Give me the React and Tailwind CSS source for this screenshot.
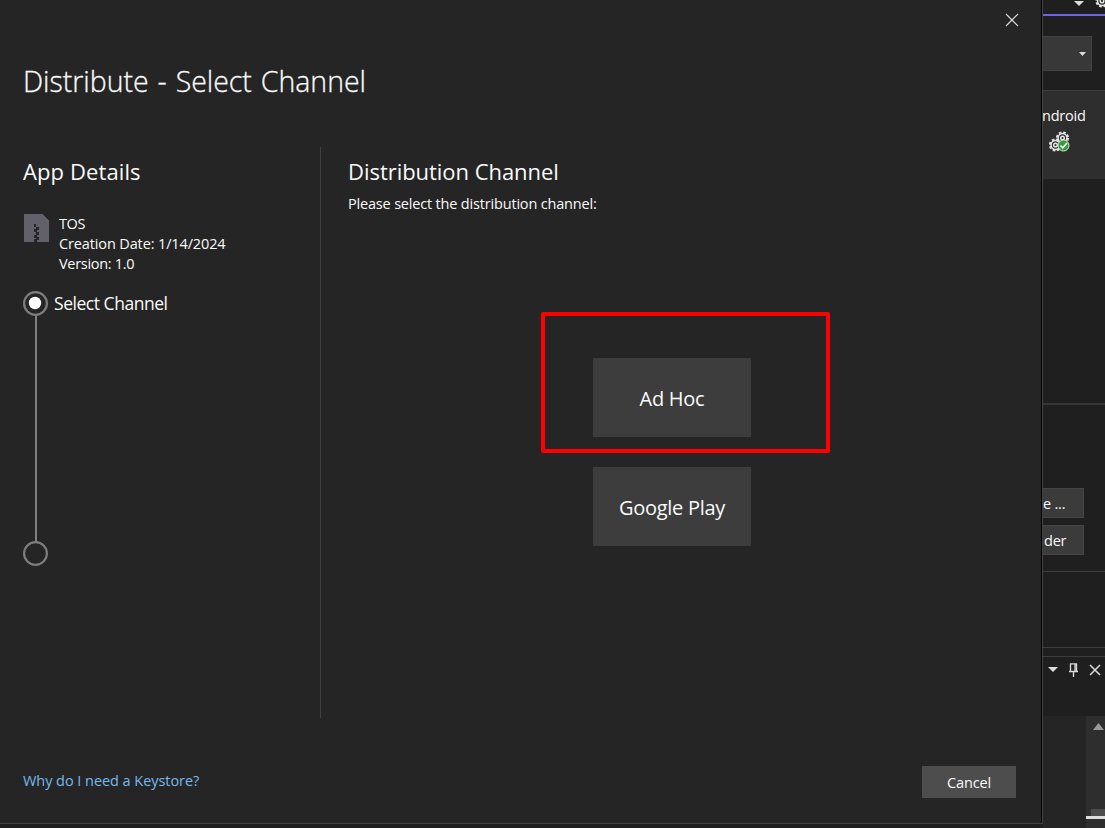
import React from 'react';

function Gear({ cx, cy }) {
  return (
    <g transform={`translate(${cx} ${cy})`}>
      <circle r="5.5" fill="none" stroke="#e4e4e4" strokeWidth="2.2" strokeDasharray="2.6 1.72" />
      <circle r="4.4" fill="none" stroke="#e4e4e4" strokeWidth="1.5" />
      <circle r="1.8" fill="none" stroke="#e4e4e4" strokeWidth="1.5" />
    </g>
  );
}

function CaretDown({ className }) {
  return (
    <svg className={className} viewBox="0 0 10 5" preserveAspectRatio="none">
      <path d="M0 0H10L5 5Z" fill="#dcdcdc" />
    </svg>
  );
}

function Dialog() {
  return (
    <main className="flex h-[824px] w-[1043px] shrink-0 flex-col border-r border-b border-[#444444] bg-[#252525]">
      <div className="flex min-h-0 flex-1 flex-col border-r border-black">
        <div className="flex h-[61px] justify-end pt-[13px] pr-[22px]">
          <svg className="h-[14px] w-[14px]" viewBox="0 0 14 14">
            <path d="M1 1L13 13M13 1L1 13" stroke="#e0e0e0" strokeWidth="1.1" />
          </svg>
        </div>
        <h1 className="h-[86px] pl-[23px] text-[28.5px] leading-[40px] font-light tracking-[-0.03px] [word-spacing:1.6px] [-webkit-text-stroke:0.3px_#fafafa]">Distribute - Select Channel</h1>
        <div className="flex h-[571px]">
          <aside className="w-[321px] border-r border-[#3f3f3f] pl-[23px]">
            <h2 className="pt-[9px] text-[22px] leading-[30px] tracking-[0.1px]">App Details</h2>
            <div className="flex h-[105px] pt-[28px]">
              <svg className="h-[28px] w-[26px] shrink-0" viewBox="0 0 26 28" shapeRendering="crispEdges">
                <path d="M1 0H19L26 7V28H1Z" fill="#62616b" />
                <path d="M11 10h2v3h-2zM13 12.5h3v3h-3zM11 15h2.500v3H11zM13 18h3v3h-3zM11 20.500h2.500v3H11zM13 23h3v2.500h-3zM11 25h2.500v3H11z" fill="#252525" />
              </svg>
              <div className="pl-[10px] text-[14.500px] leading-[20px] tracking-[-0.13px]">
                <p className="tracking-[-0.4px]">TOS</p>
                <p>Creation Date: 1/14/2024</p>
                <p className="tracking-[-0.3px]">Version: 1.0</p>
              </div>
            </div>
            <div className="flex">
              <svg className="h-[275px] w-[25px]" viewBox="0 0 25 275">
                <path d="M13 24V251" stroke="#808080" strokeWidth="2" />
                <circle cx="12.500" cy="12.500" r="11.400" fill="none" stroke="#7d7d7d" strokeWidth="2.200" />
                <circle cx="12" cy="12" r="6.200" fill="#ffffff" />
                <circle cx="12.500" cy="262.500" r="11.400" fill="none" stroke="#7d7d7d" strokeWidth="2.200" />
              </svg>
              <span className="pl-[6px] text-[17.500px] leading-[25px] tracking-[-0.46px]">Select Channel</span>
            </div>
          </aside>
          <section className="relative flex-1 pl-[27px]">
            <h2 className="pt-[9px] text-[22px] leading-[30px] tracking-[-0.04px]">Distribution Channel</h2>
            <p className="pt-[7px] text-[14.500px] leading-[22px] tracking-[-0.18px]">Please select the distribution channel:</p>
            <div className="ml-[245px] flex w-[158px] flex-col gap-[30px] pt-[143px] text-[20px] tracking-[-0.28px]">
              <button className="h-[79px] bg-[#3d3d3d] pt-[3px]">Ad Hoc</button>
              <button className="h-[79px] bg-[#3d3d3d] pt-[3px]">Google Play</button>
            </div>
            <div className="absolute top-[165px] left-[220px] h-[141px] w-[289px] rounded-[2px] border-4 border-[#ff0000]" />
          </section>
        </div>
        <footer className="flex flex-1 items-start justify-between pt-[48px] pr-[25px] pl-[23px] text-[14.500px]">
          <a className="pt-[4px] leading-[22px] tracking-[-0.05px] text-[#76b9ed]">Why do I need a Keystore?</a>
          <button className="h-[32px] w-[94px] bg-[#4d4d4d] pt-[2px] tracking-[-0.15px]">Cancel</button>
        </footer>
      </div>
    </main>
  );
}

function BackgroundWindow() {
  return (
    <aside className="flex h-[828px] min-w-0 flex-1 flex-col overflow-hidden bg-[#1f1f1f]">
      <div className="flex h-[16px] justify-between border-b-2 border-[#7160e8] pl-[31px]">
        <CaretDown className="mt-px h-[5px] w-[10px]" />
        <svg className="-mt-[5px] h-[13px] w-[10px]" viewBox="0 0 10 13">
          <Gear cx={7} cy={6} />
        </svg>
      </div>
      <div className="h-[75px] border-b border-[#3d3d3d] pt-[20px]">
        <div className="flex h-[35px] w-[49px] items-center justify-end border border-l-0 border-[#424242] bg-[#383838] pr-[5px]">
          <CaretDown className="h-[4px] w-[7px]" />
        </div>
      </div>
      <div className="h-[88px] bg-[#2e2e2e] pt-[14px]">
        <div className="-ml-px text-[14.500px] leading-[22px] tracking-[-0.2px]">ndroid</div>
        <svg className="mt-[4px] ml-[6px] h-[22px] w-[22px]" viewBox="0 0 22 22">
          <Gear cx={13.5} cy={7} />
          <Gear cx={6.5} cy={14} />
          <circle cx="14.500" cy="14.500" r="5.500" fill="#2e9e36" stroke="#e4e4e4" />
          <path d="M11.500 14.500L13.800 16.800L18 12" fill="none" stroke="#fff" strokeWidth="1.700" />
        </svg>
      </div>
      <div className="h-[226px] border-b-2 border-[#353535]" />
      <div className="flex h-[167px] flex-col gap-[7px] border-b border-[#3d3d3d] pt-[83px] text-[14.500px] leading-[29px] tracking-[-0.2px]">
        <div className="h-[30px] w-[41px] border border-l-0 border-[#454545] bg-[#3b3b3b]">e ...</div>
        <div className="h-[30px] w-[41px] border border-l-0 border-[#454545] bg-[#3b3b3b] pl-px">der</div>
      </div>
      <div className="h-[76px] border-b border-[#3d3d3d]" />
      <div className="h-[9px] border-b border-[#3d3d3d]" />
      <div className="flex h-[59px] items-start pt-[5px]">
        <CaretDown className="mt-[5px] ml-[5px] h-[5px] w-[10px]" />
        <svg className="mt-px ml-[11px] h-[14px] w-[9px]" viewBox="0 0 9 14">
          <path d="M1.500 8.500V.8H7.500V8.500M0 8.500H9M4.500 9V14M6 1V8" fill="none" stroke="#dcdcdc" strokeWidth="1.300" />
        </svg>
        <svg className="mt-[2px] ml-[11px] h-[12px] w-[12px]" viewBox="0 0 12 12">
          <path d="M1 1L11 11M11 1L1 11" stroke="#dcdcdc" strokeWidth="1.500" />
        </svg>
      </div>
      <div className="flex flex-1 bg-[#252525]">
        <div className="w-[43px]" />
        <div className="flex flex-1 flex-col bg-[#2e2e2e]">
          <svg className="mt-[7px] ml-[7px] h-[7px] w-[11px]" viewBox="0 0 11 7">
            <path d="M0 7H11L5.500 0Z" fill="#999999" />
          </svg>
          <div className="mt-[79px] ml-[5px] h-[7px] bg-[#4d4d4d]" />
          <div className="h-[3px] bg-[#dedede]" />
        </div>
      </div>
    </aside>
  );
}

export default function App() {
  return (
    <div className="flex h-[828px] w-[1105px] overflow-hidden bg-[#1f1f1f] font-['Open_Sans','Noto_Sans',sans-serif] text-[#fafafa]">
      <Dialog />
      <BackgroundWindow />
    </div>
  );
}
